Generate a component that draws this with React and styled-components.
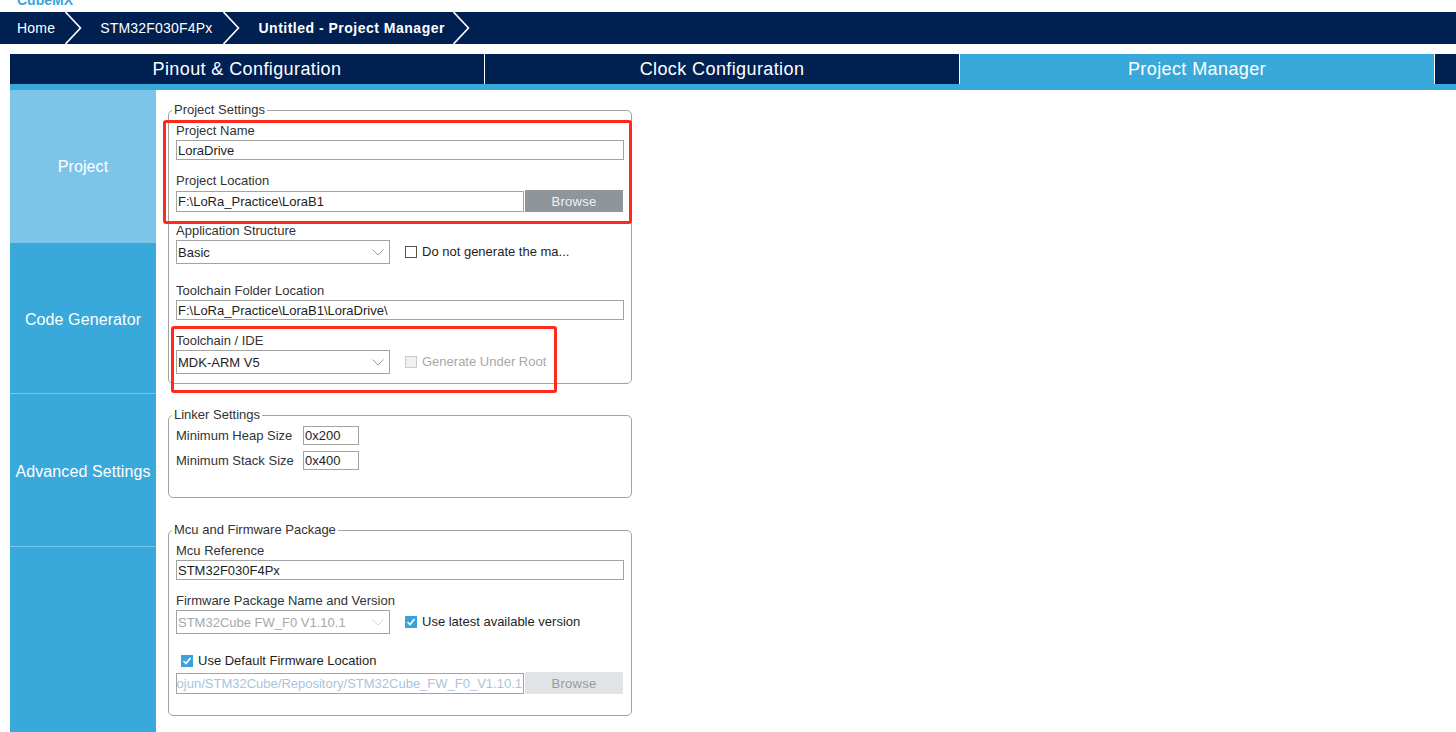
import styled, { createGlobalStyle } from "styled-components";

const NAVY = "#002052";
const BLUE = "#39a9db";

const GlobalStyle = createGlobalStyle`
  html, body {
    margin: 0;
    padding: 0;
    background: #fff;
    overflow: hidden;
  }
  body {
    font-family: "Liberation Sans", Arial, sans-serif;
  }
`;

const Page = styled.div`
  width: 1456px;
  height: 732px;
  overflow: hidden;
`;

const TopStrip = styled.div`
  height: 12px;
  overflow: hidden;
  padding-left: 17px;
`;

const Brand = styled.div`
  margin-top: -7px;
  font-size: 14px;
  line-height: 14px;
  font-weight: bold;
  color: #3ba4d9;
`;

const Breadcrumb = styled.div`
  height: 32px;
  background: ${NAVY};
  display: flex;
  align-items: center;
  padding-left: 17px;
`;

const Crumb = styled.span`
  color: #fff;
  font-size: 14px;
  font-weight: ${(p) => (p.$current ? "bold" : "normal")};
  letter-spacing: ${(p) => (p.$current ? "0.5px" : "0.2px")};
  white-space: nowrap;
`;

const ChevronWrap = styled.span`
  display: flex;
  height: 32px;
  margin: 0 ${(p) => p.$after}px 0 ${(p) => p.$before}px;
`;

function Chevron({ before = 10, after = 18 }) {
  return (
    <ChevronWrap $before={before} $after={after}>
      <svg width="17" height="32" viewBox="0 0 17 32">
        <polyline points="0.5,0 15.5,16 0.5,32" fill="none" stroke="#fff" strokeWidth="1.6" />
      </svg>
    </ChevronWrap>
  );
}

const TabBar = styled.div`
  margin: 10px 0 0 10px;
  height: 30px;
  background: ${NAVY};
  display: flex;
`;

const Tab = styled.div`
  box-sizing: border-box;
  width: 475px;
  height: 30px;
  border-right: 1px solid #fff;
  background: ${(p) => (p.$active ? BLUE : NAVY)};
  color: #fff;
  font-size: 18px;
  letter-spacing: 0.4px;
  display: flex;
  align-items: center;
  justify-content: center;
`;

const TabStrip = styled.div`
  margin-left: 10px;
  height: 6px;
  background: ${BLUE};
`;

const Main = styled.div`
  margin-left: 10px;
  height: 642px;
  display: flex;
`;

const Sidebar = styled.div`
  width: 146px;
  background: ${BLUE};
  display: flex;
  flex-direction: column;
`;

const SideItem = styled.div`
  box-sizing: border-box;
  height: ${(p) => p.$h}px;
  padding-top: ${(p) => (p.$active ? 0 : 3)}px;
  background: ${(p) => (p.$active ? "#7dc5e8" : BLUE)};
  border-bottom: ${(p) => (p.$line ? "1px solid #7cc6ea" : "none")};
  color: #fff;
  font-size: 16px;
  letter-spacing: 0.1px;
  display: flex;
  align-items: center;
  justify-content: center;
  white-space: nowrap;
`;

const Content = styled.div`
  position: relative;
  padding-left: 12px;
  padding-top: 13px;
`;

const Group = styled.fieldset`
  box-sizing: border-box;
  width: 464px;
  margin: ${(p) => p.$mt || 0}px 0 0 0;
  padding: ${(p) => p.$pt}px 7px ${(p) => p.$pb}px 7px;
  border: 1px solid #a3a3a3;
  border-radius: 5px;
`;

const Legend = styled.legend`
  margin-left: -4px;
  padding: 0 2px;
  font-size: 13px;
  line-height: 14px;
  color: #333;
`;

const Field = styled.div`
  margin-top: ${(p) => p.$mt || 0}px;
`;

const Label = styled.div`
  font-size: 13px;
  line-height: 16px;
  color: #333;
  margin-bottom: 1px;
`;

const TextBox = styled.div`
  box-sizing: border-box;
  width: ${(p) => p.$w || 448}px;
  height: ${(p) => p.$h || 20}px;
  border: 1px solid #a3a3a3;
  background: #fff;
  font-size: 13px;
  color: ${(p) => (p.$disabled ? "#a7c4de" : "#1e1e1e")};
  padding: 0 1px;
  display: flex;
  align-items: center;
  justify-content: ${(p) => (p.$end ? "flex-end" : "flex-start")};
  overflow: hidden;
  white-space: nowrap;
`;

const Row = styled.div`
  display: flex;
  align-items: center;
  margin-top: ${(p) => p.$mt || 0}px;
  padding-left: ${(p) => p.$pl || 0}px;
`;

const BrowseButton = styled.div`
  box-sizing: border-box;
  width: 98px;
  height: 22px;
  margin-left: 1px;
  background: ${(p) => (p.$disabled ? "#e1e4e7" : "#8e959b")};
  color: ${(p) => (p.$disabled ? "#9a9a9a" : "#f2f2f2")};
  font-size: 13px;
  letter-spacing: 0.3px;
  display: flex;
  align-items: center;
  justify-content: center;
`;

const SelectBox = styled.div`
  box-sizing: border-box;
  width: 214px;
  height: 24px;
  border: 1px solid #a3a3a3;
  background: #fff;
  font-size: 13px;
  color: ${(p) => (p.$disabled ? "#a8a8a8" : "#1e1e1e")};
  padding: 0 5px 0 1px;
  display: flex;
  align-items: center;
  justify-content: space-between;
`;

function Select({ value, disabled }) {
  return (
    <SelectBox $disabled={disabled}>
      <span>{value}</span>
      <svg width="12" height="7" viewBox="0 0 12 7">
        <polyline points="0.5,0.5 6,6 11.5,0.5" fill="none" stroke={disabled ? "#d5d5d5" : "#9a9a9a"} strokeWidth="1" />
      </svg>
    </SelectBox>
  );
}

const CheckLabel = styled.label`
  display: flex;
  align-items: center;
  gap: 5px;
  margin-left: ${(p) => p.$ml || 0}px;
  font-size: 13px;
  line-height: 16px;
  color: ${(p) => (p.$disabled ? "#a8a8a8" : "#1e1e1e")};
  white-space: nowrap;
`;

const Box = styled.span`
  box-sizing: border-box;
  width: 12px;
  height: 12px;
  border: 1px solid ${(p) => (p.$checked ? "#3aa3dc" : p.$disabled ? "#cccccc" : "#555")};
  background: ${(p) => (p.$checked ? "#3aa3dc" : p.$disabled ? "#f0f0f0" : "#fff")};
  display: flex;
  align-items: center;
  justify-content: center;
`;

function Check({ checked, disabled, children, ml }) {
  return (
    <CheckLabel $disabled={disabled} $ml={ml}>
      <Box $checked={checked} $disabled={disabled}>
        {checked && (
          <svg width="10" height="10" viewBox="0 0 10 10">
            <polyline points="1.5,5 4,7.5 8.5,2" fill="none" stroke="#fff" strokeWidth="1.6" />
          </svg>
        )}
      </Box>
      {children}
    </CheckLabel>
  );
}

const LinkerGrid = styled.div`
  display: grid;
  grid-template-columns: 127px 56px;
  row-gap: 6px;
  align-items: center;
  font-size: 13px;
  color: #333;
`;

const Highlight = styled.div`
  position: absolute;
  left: ${(p) => p.$x}px;
  top: ${(p) => p.$y}px;
  width: ${(p) => p.$w}px;
  height: ${(p) => p.$h}px;
  box-sizing: border-box;
  border: 3px solid #fe2a1e;
  border-radius: 3px;
  pointer-events: none;
`;

export default function App() {
  return (
    <Page>
      <GlobalStyle />
      <TopStrip>
        <Brand>CubeMX</Brand>
      </TopStrip>
      <Breadcrumb>
        <Crumb>Home</Crumb>
        <Chevron />
        <Crumb>STM32F030F4Px</Crumb>
        <Chevron before={11} after={18} />
        <Crumb $current>Untitled - Project Manager</Crumb>
        <Chevron before={8} after={0} />
      </Breadcrumb>

      <TabBar>
        <Tab>Pinout &amp; Configuration</Tab>
        <Tab>Clock Configuration</Tab>
        <Tab $active>Project Manager</Tab>
      </TabBar>
      <TabStrip />

      <Main>
        <Sidebar>
          <SideItem $h={153} $active>Project</SideItem>
          <SideItem $h={151} $line>Code Generator</SideItem>
          <SideItem $h={153} $line>Advanced Settings</SideItem>
        </Sidebar>

        <Content>
          <Group $pt={6} $pb={9}>
            <Legend>Project Settings</Legend>
            <Field>
              <Label>Project Name</Label>
              <TextBox>LoraDrive</TextBox>
            </Field>
            <Field $mt={13}>
              <Label>Project Location</Label>
              <Row>
                <TextBox $w={348} $h={21}>F:\LoRa_Practice\LoraB1</TextBox>
                <BrowseButton>Browse</BrowseButton>
              </Row>
            </Field>
            <Field $mt={11}>
              <Label>Application Structure</Label>
              <Row>
                <Select value="Basic" />
                <Check ml={15}>Do not generate the ma...</Check>
              </Row>
            </Field>
            <Field $mt={19}>
              <Label>Toolchain Folder Location</Label>
              <TextBox>F:\LoRa_Practice\LoraB1\LoraDrive\</TextBox>
            </Field>
            <Field $mt={13}>
              <Label>Toolchain / IDE</Label>
              <Row>
                <Select value="MDK-ARM V5" />
                <Check ml={15} disabled>Generate Under Root</Check>
              </Row>
            </Field>
          </Group>

          <Group $mt={24} $pt={4} $pb={27}>
            <Legend>Linker Settings</Legend>
            <LinkerGrid>
              <span>Minimum Heap Size</span>
              <TextBox $w={56} $h={19}>0x200</TextBox>
              <span>Minimum Stack Size</span>
              <TextBox $w={56} $h={19}>0x400</TextBox>
            </LinkerGrid>
          </Group>

          <Group $mt={25} $pt={6} $pb={21}>
            <Legend>Mcu and Firmware Package</Legend>
            <Field>
              <Label>Mcu Reference</Label>
              <TextBox>STM32F030F4Px</TextBox>
            </Field>
            <Field $mt={13}>
              <Label>Firmware Package Name and Version</Label>
              <Row>
                <Select value="STM32Cube FW_F0 V1.10.1" disabled />
                <Check ml={15} checked>Use latest available version</Check>
              </Row>
            </Field>
            <Row $mt={19} $pl={5}>
              <Check checked>Use Default Firmware Location</Check>
            </Row>
            <Row $mt={3}>
              <TextBox $w={348} $h={21} $disabled $end>
                C:/Users/zhaojun/STM32Cube/Repository/STM32Cube_FW_F0_V1.10.1
              </TextBox>
              <BrowseButton $disabled>Browse</BrowseButton>
            </Row>
          </Group>

          <Highlight $x={7} $y={30} $w={469} $h={104} />
          <Highlight $x={15} $y={236} $w={386} $h={67} />
        </Content>
      </Main>
    </Page>
  );
}
